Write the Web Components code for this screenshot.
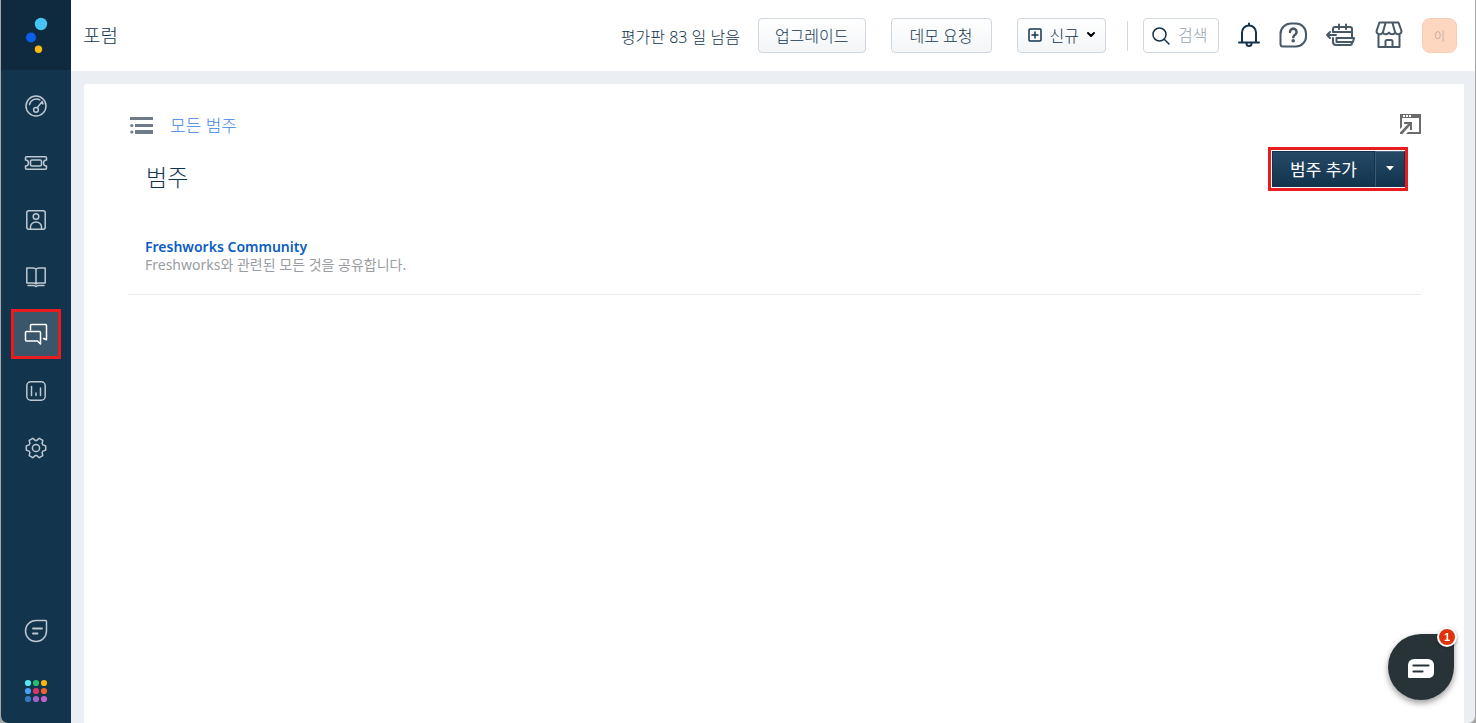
<!DOCTYPE html>
<html lang="ko">
<head>
<meta charset="utf-8">
<meta name="viewport" content="width=device-width, initial-scale=1">
<title>포럼</title>
<style>
  html { background: #a6a6a6; }
  body {
    margin: 0;
    font-family: "Noto Sans", "Noto Sans CJK KR", sans-serif;
    font-size: 16px;
    color: #12344d;
  }
</style>
</head>
<body>
<forum-app></forum-app>

<script>
const define = (name, html) => {
  const template = document.createElement('template');
  template.innerHTML = html;
  customElements.define(name, class extends HTMLElement {
    constructor() {
      super();
      this.attachShadow({ mode: 'open' }).append(template.content.cloneNode(true));
    }
  });
};

/* ---------- icons ---------- */
const icons = {
  logo: ['0 0 24 38', `<g stroke="none"><circle cx="17" cy="8" r="6.200" fill="#45c4f5"/><circle cx="7" cy="21.500" r="5" fill="#0b5fe8"/><circle cx="14.500" cy="33.300" r="3.700" fill="#fdb913"/></g>`],
  gauge: ['0 0 24 24', `<circle cx="12" cy="12" r="10"/><path d="M5.500 10.500a7 7 0 0 1 10.300-4.600M13.200 13.700l5-6.200M18.200 7.500a7 7 0 0 1 .6 2.500"/><circle cx="12" cy="15.800" r="2.400"/>`],
  ticket: ['0 0 24 24', `<path d="M2.500 5.800h19a1 1 0 0 1 1 1V9a3 3 0 0 0 0 6v2.200a1 1 0 0 1-1 1h-19a1 1 0 0 1-1-1V15a3 3 0 0 0 0-6V6.800a1 1 0 0 1 1-1z"/><rect x="6.500" y="9" width="11" height="6" rx="1.500"/>`],
  contact: ['0 0 24 24', `<rect x="2.800" y="2.800" width="18.400" height="18.400" rx="2"/><circle cx="12" cy="8.500" r="2.800"/><path d="M6.500 21v-2a5.500 5 0 0 1 11 0v2"/>`],
  book: ['0 0 24 24', `<path d="M12 4.500C11.500 3.500 10.500 3 9 3H2.800v15H9c1.500 0 2.500.3 3 1 .5-.7 1.500-1 3-1h6.200V3H15c-1.500 0-2.500.5-3 1.500zM12 4.500V19M4 20.500h5.500c1.500 0 2 .4 2.500 1.200.5-.8 1-1.200 2.500-1.200H20"/>`],
  forum: ['0 0 24 24', `<path d="M6.500 8V3.500a1 1 0 0 1 1-1h14a1 1 0 0 1 1 1v14.300l-3-1.300"/><path d="M2.500 9.500h13a1 1 0 0 1 1 1V22l-3-3h-11a1 1 0 0 1-1-1v-7.500a1 1 0 0 1 1-1z"/>`],
  chart: ['0 0 24 24', `<rect x="2.800" y="2.800" width="18.400" height="18.400" rx="4"/><path d="M7.500 7.500v9M12 14v2.500M16.500 9v7.500"/>`],
  gear: ['0 0 24 24', `<path d="M21.700 9.900v4.200l-2.800 1-.8 1.400.7 3.100-3.600 2.100-2.400-2.100h-1.600l-2.400 2.100-3.600-2.100.7-3.100-.8-1.400-2.800-1V9.900l2.800-1 .8-1.400-.7-3.100 3.600-2.100 2.400 2.100h1.600l2.400-2.100 3.600 2.100-.7 3.100.8 1.400z"/><circle cx="12" cy="12" r="3.600"/>`],
  chatleaf: ['0 0 24 24', `<path d="M12 1.500h9.500a1 1 0 0 1 1 1V12A10.500 10.500 0 1 1 12 1.500z"/><path d="M9 9.500h9M9 14.500h4.500" stroke-width="1.800"/>`],
  apps: ['0 0 24 24', `<g stroke="none"><circle cx="4" cy="4" r="3.100" fill="#54e8f0"/><circle cx="12" cy="4" r="3.100" fill="#29bb70"/><circle cx="20" cy="4" r="3.100" fill="#fdb60b"/><circle cx="4" cy="12" r="3.100" fill="#4a9fee"/><circle cx="12" cy="12" r="3.100" fill="#d9355f"/><circle cx="20" cy="12" r="3.100" fill="#f0602b"/><circle cx="4" cy="20" r="3.100" fill="#3377c0"/><circle cx="12" cy="20" r="3.100" fill="#a262c5"/><circle cx="20" cy="20" r="3.100" fill="#c263c8"/></g>`],
  plusbox: ['0 0 14 14', `<rect x="1" y="1" width="12" height="12" rx="1"/><path d="M7 4v6M4 7h6"/>`],
  chevron: ['0 0 8 6', `<path d="M1 1l3 3 3-3" stroke="#000" stroke-width="2"/>`],
  search: ['0 0 18 18', `<circle cx="7.500" cy="7.500" r="6.500"/><path d="M12.200 12.200l4.800 4.800"/>`],
  bell: ['0 0 22 26', `<path d="M4 20v-9.500a7 7 0 0 1 14 0V20M1 20.500h20M11 3.500V1.500M8.500 21.500a2.500 2.500 0 0 0 5 0"/>`],
  help: ['0 0 28 26', `<path d="M12 1.500h5a10 10 0 0 1 10 10v3a10 10 0 0 1-10 10H4A2.500 2.500 0 0 1 1.500 22V12A10.500 10.500 0 0 1 12 1.500z"/><path d="M11 10a3.300 3.300 0 1 1 5 2.800c-1.300.9-1.700 1.400-1.700 2.400" stroke-width="2.500"/><circle cx="14.200" cy="18.800" r=".8" fill="currentColor"/>`],
  calendar: ['0 0 30 26', `<path d="M7 10V7a2 2 0 0 1 2-2h15a2 2 0 0 1 2 2v8M7 16v4a3 3 0 0 0 3 3h14a2 2 0 0 0 2-2M13 2.500V7M20 2.500V7M7 10h19M10 13H1M4 10l-3 3 3 3M10.500 16H28l-1 4H10.500z"/>`],
  store: ['0 0 28 28', `<path d="M4.500 1.500h19l3 8.500a3.300 3.300 0 0 1-6.200 1.500 3.600 3.600 0 0 1-6.300 0 3.600 3.600 0 0 1-6.300 0A3.300 3.300 0 0 1 1.500 10zM10.500 2L8 11M17.500 2L20 11M3.500 14v12h21V14M10.500 26v-5.500a1.500 1.500 0 0 1 1.500-1.500h4a1.500 1.500 0 0 1 1.500 1.500V26"/>`],
  list: ['0 0 24 18', `<g stroke="none" fill="currentColor"><rect x="0" y="1" width="23" height="3"/><rect x="5" y="8" width="18" height="3"/><rect x="5" y="14" width="18" height="4"/><circle cx="1.800" cy="9.500" r="1.600"/><circle cx="1.800" cy="16" r="1.600"/></g>`],
  popout: ['0 0 21 20', `<g stroke="none" fill="currentColor"><path d="M0 0h21v20H6l2-2h11V4H2v9l-2 2z"/><path d="M4 8h8v8h-2v-4.500L2.500 20H0v-1.500L8 10H4z"/></g><path d="M3 1h2v2H3zM6 1h2v2H6zM9 1h2v2H9z" fill="#fff" stroke="none"/>`],
  caret: ['0 0 8 5', `<path d="M0 0h8L4 4.500z" fill="currentColor" stroke="none"/>`],
  message: ['0 0 26 20', `<path d="M6 0h14a6 6 0 0 1 6 6v8a5 5 0 0 1-5 5H1a1 1 0 0 1-1-1V6a6 6 0 0 1 6-6z" fill="#fff" stroke="none"/><path d="M5.500 6.500h15M5.500 12.500h9" stroke="#283338" stroke-width="2.200"/>`]
};
customElements.define('ui-icon', class extends HTMLElement {
  connectedCallback() {
    if (this.shadowRoot) return;
    const [box, shape] = icons[this.getAttribute('name')];
    const [, , w, h] = box.split(' ');
    this.attachShadow({ mode: 'open' }).innerHTML = `
      <style>:host { display: inline-flex; flex: none; } svg { display: block; overflow: visible; }</style>
      <svg width="${w}" height="${h}" viewBox="${box}" fill="none" stroke="currentColor"
        stroke-width="${this.getAttribute('stroke') || 1.5}" stroke-linecap="round" stroke-linejoin="round" aria-hidden="true">${shape}</svg>`;
  }
});

/* ---------- sidebar ---------- */
customElements.define('nav-item', class extends HTMLElement {
  connectedCallback() {
    if (this.shadowRoot) return;
    this.attachShadow({ mode: 'open' }).innerHTML = `
      <style>
        :host { display: grid; place-items: center; height: 57px; }
        a { box-sizing: border-box; display: grid; place-items: center; width: 50px; height: 50px; color: #bdc8d1; }
        :host([active]) a { color: #fff; background: #3b556a; border: 3px solid #e91c1f; }
      </style>
      <a href="#" aria-label="${this.getAttribute('label')}"><ui-icon name="${this.getAttribute('icon')}"></ui-icon></a>`;
  }
});
define('side-nav', `
  <style>
    :host { display: flex; flex-direction: column; width: 70px; background: #12344d; }
    .logo { display: grid; place-items: center; height: 70px; background: #0f2a3e; }
    nav { flex: 1; display: flex; flex-direction: column; padding: 7px 0 4px; }
    .bottom { display: grid; gap: 3px; margin-top: auto; }
  </style>
  <div class="logo"><ui-icon name="logo"></ui-icon></div>
  <nav>
    <nav-item icon="gauge" label="대시보드"></nav-item>
    <nav-item icon="ticket" label="티켓"></nav-item>
    <nav-item icon="contact" label="연락처"></nav-item>
    <nav-item icon="book" label="솔루션"></nav-item>
    <nav-item icon="forum" label="포럼" active></nav-item>
    <nav-item icon="chart" label="분석"></nav-item>
    <nav-item icon="gear" label="관리"></nav-item>
    <div class="bottom">
      <nav-item icon="chatleaf" label="채팅"></nav-item>
      <nav-item icon="apps" label="앱 전환"></nav-item>
    </div>
  </nav>`);

/* ---------- header ---------- */
define('outline-button', `
  <style>
    :host { display: block; }
    button {
      box-sizing: border-box; display: flex; align-items: center; gap: 8px; height: 35px; padding: 0 var(--pad, 16px) 2px;
      border: 1px solid #cfd7df; border-radius: 4px; background: linear-gradient(#fff, #f3f5f7);
      font: inherit; color: inherit; white-space: nowrap;
    }
  </style>
  <button type="button"><slot></slot></button>`);
define('search-box', `
  <style>
    :host { display: block; width: 76px; }
    label { box-sizing: border-box; display: flex; align-items: center; gap: 8px; height: 35px; padding: 0 8px; border: 1px solid #cfd7df; border-radius: 4px; }
    input { flex: 1; min-width: 0; padding: 0 0 2px; border: 0; outline: 0; background: none; font: inherit; color: inherit; }
    input::placeholder { color: #92a2b1; opacity: 1; }
  </style>
  <label><ui-icon name="search"></ui-icon><input type="text" placeholder="검색" aria-label="검색"></label>`);
define('icon-button', `
  <style>
    :host { display: block; }
    button { display: block; padding: 0; border: 0; background: none; color: inherit; }
  </style>
  <button type="button"><slot></slot></button>`);
define('user-avatar', `
  <style>
    :host { display: block; }
    button { display: block; width: 35px; height: 35px; padding: 0; border: 1px solid #f6cdb5; border-radius: 8px; background: #ffd7c0; color: #b99b96; font: inherit; font-size: 12px; }
  </style>
  <button type="button"><slot></slot></button>`);
define('top-bar', `
  <style>
    :host { box-sizing: border-box; display: flex; align-items: center; height: 71px; padding: 0 18px 0 12px; background: #fff; font-weight: 300; }
    h1 { flex: 1; margin: 0; padding-bottom: 2px; font-size: 19px; font-weight: 300; }
    .trial { margin-right: 18px; white-space: nowrap; }
    .actions { display: flex; gap: 25px; }
    .wide { --pad: 18px; }
    .compact { --pad: 10px; }
    .divider { width: 1px; height: 30px; margin: 0 15px 0 21px; background: #cfd7df; }
    .tools { display: flex; align-items: center; gap: 19px; margin-left: 19px; color: #475867; }
    .tools icon-button { padding-top: 2px; }
    .bell { color: #12344d; }
  </style>
  <h1>포럼</h1>
  <span class="trial">평가판 83 일 남음</span>
  <div class="actions">
    <outline-button>업그레이드</outline-button>
    <outline-button class="wide">데모 요청</outline-button>
    <outline-button class="compact"><ui-icon name="plusbox"></ui-icon>신규<ui-icon name="chevron"></ui-icon></outline-button>
  </div>
  <div class="divider"></div>
  <search-box></search-box>
  <div class="tools">
    <icon-button class="bell"><ui-icon name="bell" stroke="2"></ui-icon></icon-button>
    <icon-button><ui-icon name="help" stroke="2"></ui-icon></icon-button>
    <icon-button><ui-icon name="calendar" stroke="2"></ui-icon></icon-button>
    <icon-button><ui-icon name="store" stroke="2"></ui-icon></icon-button>
    <user-avatar>이</user-avatar>
  </div>`);

/* ---------- content ---------- */
define('split-button', `
  <style>
    :host { display: flex; border: 3px solid #e91c1f; padding: 1px 0 1px 1px; font-size: 17px; }
    button { display: flex; align-items: center; height: 36px; padding: 0 17px 2px; border: 1px solid #12344d; background: linear-gradient(#264966, #12344d); color: #fff; font: inherit; white-space: nowrap; }
    button:first-child { border-radius: 3px 0 0 3px; }
    button:last-child { padding: 0 10px 2px; border-left-color: #3b5a75; border-top-color: #4d6b84; }
  </style>
  <button type="button"><slot></slot></button><button type="button" aria-label="더 보기"><ui-icon name="caret"></ui-icon></button>`);
define('category-item', `
  <style>
    :host { display: block; padding: 0 17px 20px; border-bottom: 1px solid #ebeced; }
    h3 { margin: 0; font-size: 14px; line-height: 18px; font-weight: 600; }
    ::slotted(a) { color: #0a5dc2; text-decoration: none; }
    p { margin: 0; font-size: 14px; line-height: 18px; color: #999da2; }
  </style>
  <h3><slot name="title"></slot></h3>
  <p><slot></slot></p>`);
define('category-panel', `
  <style>
    :host { display: block; flex: 1; padding: 27px 43px 0 44px; background: #fff; border-radius: 3px 0 0 0; }
    .crumbs { display: flex; align-items: center; gap: 16px; height: 26px; padding: 0 0 0 2px; color: #6f7c87; }
    .crumbs ui-icon { padding-top: 2px; }
    .crumbs icon-button { color: #6b6b6b; }
    .crumbs a { flex: 1; color: #3c86e0; text-decoration: none; font-size: 17px; font-weight: 300; }
    .heading { display: flex; align-items: center; justify-content: space-between; height: 44px; margin: 10px 13px 47px 18px; }
    h2 { margin: 0; padding-top: 14px; font-size: 23px; font-weight: 300; }
  </style>
  <div class="crumbs">
    <ui-icon name="list"></ui-icon>
    <a href="#">모든 범주</a>
    <icon-button><ui-icon name="popout"></ui-icon></icon-button>
  </div>
  <div class="heading">
    <h2>범주</h2>
    <split-button>범주 추가</split-button>
  </div>
  <category-item><a slot="title" href="#">Freshworks Community</a>Freshworks와 관련된 모든 것을 공유합니다.</category-item>`);

/* ---------- floating chat ---------- */
define('chat-launcher', `
  <style>
    :host { position: fixed; right: 22px; bottom: 23px; }
    button { display: grid; place-items: center; width: 66px; height: 66px; padding: 4px 0 0; border: 0; border-radius: 50% 5px 50% 50%; background: #283338; box-shadow: 0 3px 6px rgba(0,0,0,.4); }
    span { position: absolute; top: -7px; right: -3px; box-sizing: border-box; width: 20px; height: 20px; border: 2px solid #fff; border-radius: 50%; background: #e0330c; box-shadow: 0 1px 3px rgba(0,0,0,.4); color: #fff; font: bold 11px/16px "Liberation Sans", sans-serif; text-align: center; }
  </style>
  <button type="button" aria-label="채팅 열기"><ui-icon name="message"></ui-icon></button><span>1</span>`);

define('forum-app', `
  <style>
    :host { display: flex; min-height: 100vh; margin: 0 1px; overflow: hidden; border-radius: 0 0 7px 7px; background: #ebeef3; }
    .main { flex: 1; min-width: 0; display: flex; flex-direction: column; }
    .page { flex: 1; display: flex; padding: 13px 11px 0 13px; }
  </style>
  <side-nav></side-nav>
  <div class="main">
    <top-bar></top-bar>
    <main class="page"><category-panel></category-panel></main>
  </div>
  <chat-launcher></chat-launcher>`);
</script>
</body>
</html>
